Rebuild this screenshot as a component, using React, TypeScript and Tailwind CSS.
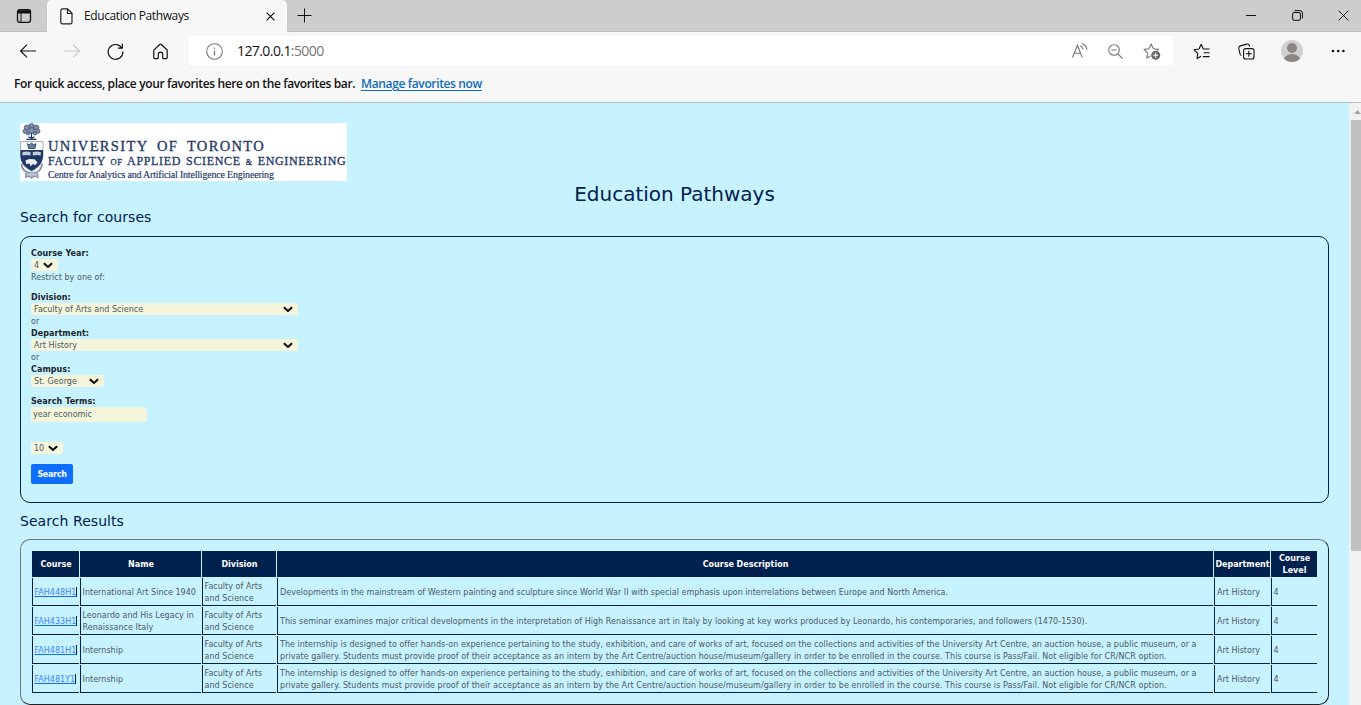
import React from "react";

const ui = "font-['Open_Sans','Noto_Sans',sans-serif]";

function Chevron() {
  return (
    <svg width="10" height="7" viewBox="0 0 10 7" fill="none" className="shrink-0">
      <path d="M0.9 1.2 L5 5 L9.1 1.2" stroke="#000" strokeWidth="2" />
    </svg>
  );
}

function Select({ value, className }: { value: string; className: string }) {
  return (
    <div className={`flex h-3 items-center justify-between rounded-[2px] bg-[#f5f5dc] pl-[3px] pr-[5px] ${className}`}>
      <span className="pt-[2px]">{value}</span>
      <Chevron />
    </div>
  );
}

function Label({ children }: { children: React.ReactNode }) {
  return <div className="h-3 pt-px font-bold tracking-[0.06px] text-[#212529]">{children}</div>;
}

function TabBar() {
  return (
    <div className="flex h-8 w-full border-b border-[#bdbdbd] bg-[#cdcdcd]">
      <div className="flex w-[47px] items-center justify-center rounded-br-[4px]">
        <svg width="16" height="14" viewBox="0 0 16 14" fill="none" className="ml-[1px]">
          <rect x="1.5" y="0.7" width="13" height="12.6" rx="2.2" stroke="#111" strokeWidth="1.3" />
          <path d="M1.5 1.2h13v3.3h-13z" fill="#111" />
          <path d="M5 4v9" stroke="#111" />
        </svg>
      </div>
      <div className="flex h-8 w-[240px] items-center rounded-t-[5px] bg-[#f7f7f7] pl-[13px]">
        <svg width="13" height="17" viewBox="0 0 13 17" fill="none">
          <path d="M2.4 0.9H7.6L12 5.3V14.2a1.6 1.6 0 0 1-1.6 1.6H2.4A1.6 1.6 0 0 1 0.8 14.2V2.5A1.6 1.6 0 0 1 2.4 0.9Z M7.5 1V5.5H12" stroke="#222" strokeWidth="1.2" />
        </svg>
        <span className="ml-[11px] w-[180px] whitespace-nowrap text-[12px] leading-4 tracking-[-0.4px] text-[#111]">Education Pathways</span>
        <svg width="9" height="9" viewBox="0 0 9 9" className="ml-[2px]">
          <path d="M0.6 0.6 8.4 8.4M8.4 0.6 0.6 8.4" stroke="#111" strokeWidth="1.2" />
        </svg>
      </div>
      <svg width="15" height="15" viewBox="0 0 15 15" className="ml-[10px] mt-2">
        <path d="M7.5 0.5v14M0.5 7.5h14" stroke="#111" />
      </svg>
      <div className="ml-auto flex items-center pr-3">
        <svg width="10" height="11" viewBox="0 0 10 11" className="mr-9">
          <path d="M0 5.5h10" stroke="#111" />
        </svg>
        <svg width="11" height="11" viewBox="0 0 11 11" fill="none" className="mr-[35px]">
          <rect x="0.6" y="2.5" width="7.8" height="7.8" rx="1.4" stroke="#111" />
          <path d="M2.5 0.6H8a2.4 2.4 0 0 1 2.4 2.4V8.4" stroke="#111" />
        </svg>
        <svg width="11" height="11" viewBox="0 0 11 11">
          <path d="M0.6 0.6 10.4 10.4M10.4 0.6 0.6 10.4" stroke="#111" />
        </svg>
      </div>
    </div>
  );
}

function Toolbar() {
  return (
    <div className="flex h-[38px] items-center bg-[#f7f7f7] pl-5 pr-4">
      <svg width="16" height="14" viewBox="0 0 16 14" fill="none" stroke="#111" strokeWidth="1.1">
        <path d="M16 7H0.8M7 0.6.6 7 7 13.4" />
      </svg>
      <svg width="16" height="14" viewBox="0 0 16 14" fill="none" stroke="#c8c8c8" strokeWidth="1.1" className="ml-7">
        <path d="M0 7h15.2M9 .6 15.4 7 9 13.4" />
      </svg>
      <svg width="17" height="17" viewBox="0 0 17 17" fill="none" stroke="#111" strokeWidth="1.2" className="ml-[27px]">
        <path d="M14.8 5A7.4 7.4 0 1 0 15.9 8.5M15.4 0.7V5.2H10.8" />
      </svg>
      <svg width="15" height="17" viewBox="0 0 15 17" fill="none" stroke="#111" strokeWidth="1.2" className="ml-[29px]">
        <path d="M.8 7.1 6.7 1.5a1.2 1.2 0 0 1 1.6 0l5.9 5.6V14.6a1 1 0 0 1-1 1H10.3a.6.6 0 0 1-.6-.6V11.3a2.2 2.2 0 0 0-4.4 0V15a.6.6 0 0 1-.6.6H1.8a1 1 0 0 1-1-1Z" />
      </svg>
      <div className="ml-[20px] flex h-[30px] w-[986px] items-center rounded-[4px] bg-white pl-[18px] pr-[13px] shadow-[0_0_3px_rgba(0,0,0,0.05)]">
        <svg width="17" height="17" viewBox="0 0 17 17" fill="none" stroke="#767676">
          <circle cx="8.5" cy="8.5" r="7.8" strokeWidth="1.1" />
          <path d="M8.5 7.4v5M8.5 4.6v1.4" strokeWidth="1.2" />
        </svg>
        <span className="ml-[14px] text-[14px] leading-5 tracking-[-0.58px] text-[#111]">
          127.0.0.1<span className="text-[#767676]">:5000</span>
        </span>
        <svg width="16" height="16" viewBox="0 0 16 16" fill="none" stroke="#767676" strokeWidth="1.1" className="ml-auto">
          <path d="M.5 14.5 5.4 2.2 10.3 14.5M2.2 10.2H8.6M8.2 2.8C9.7 3.5 10.7 4.8 11 6.4M10 .6C12.9 1.6 14.6 3.9 14.9 6.8" />
        </svg>
        <svg width="15" height="15" viewBox="0 0 15 15" fill="none" stroke="#767676" strokeWidth="1.1" className="ml-5">
          <circle cx="6" cy="6" r="5.3" />
          <path d="M9.8 9.8 14.5 14.5M3.3 6h5.4" />
        </svg>
        <svg width="18" height="18" viewBox="0 0 18 18" fill="none" className="ml-[20px]">
          <path d="M7.4 14.1 3.7 16 4.6 11 1 7.4 5.9 6.7 8.2 2 10.4 6.7 15.4 7.4 14.2 8.6" stroke="#767676" strokeWidth="1.1" strokeLinejoin="round" />
          <circle cx="12.7" cy="13.2" r="4.5" fill="#6b6b6b" />
          <path d="M12.7 10.7v5M10.2 13.2h5" stroke="#fff" strokeWidth="1.1" />
        </svg>
      </div>
      <svg width="17" height="17" viewBox="0 0 17 17" fill="none" stroke="#111" strokeWidth="1.1" strokeLinejoin="round" className="ml-[19px]">
        <path d="M8 13.3 4 15.6 4.8 10.4 1 6.8 6 6 8.2 1.2 10.4 6H16.6M10.6 9.8h6M9.8 13.6h6.8" />
      </svg>
      <svg width="17" height="17" viewBox="0 0 17 17" fill="none" stroke="#111" strokeWidth="1.1" className="ml-[28px]">
        <rect x="5.6" y="5.6" width="10.4" height="10.4" rx="2" />
        <path d="M10.8 7.8v6M7.8 10.8h6M3.4 12.5C2.6 12.3 2.3 11.9 2.1 11.2L.8 5.7C.5 4.2 1 3.3 2.3 2.9L8.7 1.1C10 .8 11 1.3 11.4 2.6L11.8 3.5" />
      </svg>
      <svg width="22" height="22" viewBox="0 0 22 22" className="ml-[26px]">
        <defs>
          <clipPath id="avatar"><circle cx="11" cy="11" r="11" /></clipPath>
        </defs>
        <g clipPath="url(#avatar)">
          <rect width="22" height="22" fill="#d2d0ce" />
          <circle cx="11" cy="8" r="5" fill="#8b8683" />
          <ellipse cx="11" cy="19.6" rx="8" ry="5.6" fill="#8b8683" />
        </g>
      </svg>
      <svg width="14" height="4" viewBox="0 0 14 4" className="ml-auto" fill="#111">
        <circle cx="2" cy="2" r="1.3" /><circle cx="7.2" cy="2" r="1.3" /><circle cx="12.4" cy="2" r="1.3" />
      </svg>
    </div>
  );
}

function Crest() {
  return (
    <svg width="24" height="58" viewBox="0 0 24 58" fill="none">
      <g fill="#7f8ea8" stroke="#3b4f77" strokeWidth="0.7">
        <circle cx="11.5" cy="3" r="2.6" /><circle cx="6.8" cy="4.6" r="2.6" /><circle cx="16.2" cy="4.6" r="2.6" />
        <circle cx="5.2" cy="8.2" r="2.2" /><circle cx="17.8" cy="8.2" r="2.2" /><circle cx="11.5" cy="7.6" r="3" />
        <circle cx="8" cy="10.4" r="1.6" /><circle cx="15" cy="10.4" r="1.6" />
      </g>
      <path d="M11.5 10v5M8.5 14.2l3 .8 3-.8M6.5 16.3h10" stroke="#1e3765" strokeWidth="1.3" />
      <path d="M.5 18.5H23V32C23 41 17 45.5 11.7 48.5 6 45.5.5 41 .5 32Z" fill="#fff" stroke="#8f9cb3" strokeWidth="0.8" />
      <path d="M7.5 20.5 9 22 11.5 20 14 22 16 20.5 15 25.5H8.5Z" fill="#6c7c9b" stroke="#1e3765" strokeWidth="0.8" />
      <path d="M.5 27H23V33C22.5 41 17 45 11.7 48 6 45 1 41 .5 33Z" fill="#1e3765" />
      <path d="M2.5 29 6.5 28.5 10.5 29V32.5L6.5 32 2.5 32.5ZM12.8 29 16.8 28.5 20.8 29V32.5L16.8 32 12.8 32.5Z" fill="#c5ccd8" />
      <path d="M5.5 37.5 9 36 14.5 36.2 17.5 39.5 14.8 42.5 13.5 40.8 10.5 43.2 9.5 40.4 6.3 41.2Z" fill="#eef0f5" />
      <path d="M1.5 40.5C1.5 47 5 49.5 11.7 50.5 18.5 49.5 22 47 22 40.5" stroke="#8190ac" strokeWidth="1.8" />
      <path d="M6 50 5.5 54.5 9 53.3 11.5 55 14.5 53.3 18 54.5 17.5 50" stroke="#7b8aa6" strokeWidth="1.2" fill="#b7c0cf" />
    </svg>
  );
}

function Logo() {
  return (
    <div className="flex h-[58px] w-[327px] overflow-hidden bg-white font-['Liberation_Serif',serif] text-[#1e3765]">
      <Crest />
      <div className="ml-1 flex flex-col whitespace-nowrap pt-[15px]">
        <div className="h-4 text-[14.5px] leading-4 tracking-[1.35px] [-webkit-text-stroke:0.3px_#1e3765] [word-spacing:4px]">UNIVERSITY OF TORONTO</div>
        <div className="h-[13px] text-[12px] leading-[14px] tracking-[0.67px] [-webkit-text-stroke:0.3px_#1e3765] [word-spacing:1.3px]">
          FACULTY <span className="text-[8.5px]">OF</span> APPLIED SCIENCE <span className="text-[8px]">&amp;</span> ENGINEERING
        </div>
        <div className="h-[14px] text-[10px] leading-[16px] tracking-[-0.2px] [-webkit-text-stroke:0.15px_#1e3765]">Centre for Analytics and Artificial Intelligence Engineering</div>
      </div>
    </div>
  );
}

const internship = [
  "The internship is designed to offer hands-on experience pertaining to the study, exhibition, and care of works of art, focused on the collections and activities of the University Art Centre, an auction house, a public museum, or a",
  "private gallery. Students must provide proof of their acceptance as an intern by the Art Centre/auction house/museum/gallery in order to be enrolled in the course. This course is Pass/Fail. Not eligible for CR/NCR option.",
];

const courses = [
  { code: "FAH448H1", name: ["International Art Since 1940"], description: ["Developments in the mainstream of Western painting and sculpture since World War II with special emphasis upon interrelations between Europe and North America."] },
  { code: "FAH433H1", name: ["Leonardo and His Legacy in", "Renaissance Italy"], description: ["This seminar examines major critical developments in the interpretation of High Renaissance art in Italy by looking at key works produced by Leonardo, his contemporaries, and followers (1470-1530)."] },
  { code: "FAH481H1", name: ["Internship"], description: internship },
  { code: "FAH481Y1", name: ["Internship"], description: internship },
];

const columns = "grid grid-cols-[47px_121px_74px_936px_56px_46px] gap-x-px";

function Cell({ lines, className = "pl-[1.5px] tracking-[0.03px]" }: { lines: string[]; className?: string }) {
  return (
    <div className={`flex flex-col justify-center whitespace-nowrap border-b border-l border-[#00204e] pt-[2px] ${className}`}>
      {lines.map((line, i) => (
        <span key={line} className={i === 1 ? "tracking-[0.05px]" : ""}>{line}</span>
      ))}
    </div>
  );
}

function Results() {
  return (
    <div className="h-[166px] rounded-[10px] border border-b-[#222] border-l-[#767676] border-r-[#222] border-t-[#767676] pl-[11px] pt-[11px]">
      <div className={`${columns} h-[26px] text-center font-bold text-white`}>
        {["Course", "Name", "Division", "Course Description", "Department", "Course Level"].map((h) => (
          <div key={h} className="flex items-center justify-center bg-[#00204e] pl-px pt-[2px]">{h}</div>
        ))}
      </div>
      {courses.map((c) => (
        <div key={c.code} className={`${columns} mt-px h-7`}>
          <div className="flex items-center border-b border-l border-[#00204e] pl-[1.5px]">
            <a className="h-[10px] border-r border-[#00204e] leading-[11px] text-[#3d86f7] underline decoration-[#0d6efd] underline-offset-1">{c.code}</a>
          </div>
          <Cell lines={c.name} />
          <Cell lines={["Faculty of Arts", "and Science"]} />
          <Cell lines={c.description} className="pl-[2px] tracking-[0.025px]" />
          <Cell lines={["Art History"]} className="pl-[2px]" />
          <Cell lines={["4"]} />
        </div>
      ))}
    </div>
  );
}

export default function App() {
  return (
    <div className={`flex h-[705px] w-[1361px] flex-col overflow-hidden bg-[#f7f7f7] ${ui}`}>
      <TabBar />
      <Toolbar />
      <div className="flex h-[33px] border-b border-[#bcbcbc] bg-[#f7f7f7] pl-[14px] pt-[6px] text-[12px] font-semibold leading-4 text-[#111]">
        <span className="w-[347px] whitespace-nowrap tracking-[-0.37px]">For quick access, place your favorites here on the favorites bar.</span>
        <a className="whitespace-nowrap tracking-[-0.36px] text-[#0f6cbd] underline underline-offset-2">Manage favorites now</a>
      </div>
      <div className="flex h-[602px]">
        <main className="w-[1349px] bg-[#c7f2ff] px-5 pt-5 font-['DejaVu_Sans',sans-serif] text-[8px] leading-3 text-[#4c5a62]">
          <Logo />
          <h1 className="h-[25px] text-center text-[20px] leading-[26px] text-[#00204e]">Education Pathways</h1>
          <h2 className="h-[30px] text-[14px] leading-[22px] tracking-[0.06px] text-[#00204e]">Search for courses</h2>
          <section className="h-[267px] rounded-[10px] border border-[#00204e] pl-[10px] pt-[10px]">
            <Label>Course Year:</Label>
            <Select value="4" className="w-[27px]" />
            <div className="mb-2 h-3 pt-px tracking-[0.05px]">Restrict by one of:</div>
            <Label>Division:</Label>
            <Select value="Faculty of Arts and Science" className="w-[267px] tracking-[0.03px]" />
            <div className="h-3 pt-px">or</div>
            <Label>Department:</Label>
            <Select value="Art History" className="w-[267px]" />
            <div className="h-3 pt-px">or</div>
            <Label>Campus:</Label>
            <Select value="St. George" className="mb-2 w-[73px] tracking-[0.05px]" />
            <Label>Search Terms:</Label>
            <div className="flex h-[15px] w-[116px] items-center rounded-[2px] bg-[#f5f5dc] pl-[2px]">year economic</div>
            <Select value="10" className="mt-5 w-8" />
            <button className="mt-[10px] flex h-5 w-[42px] items-center justify-center rounded-[2px] bg-[#0d6efd] pt-[2px] font-bold tracking-[-0.3px] text-white">Search</button>
          </section>
          <h2 className="h-9 pt-[7px] text-[14px] leading-[22px] tracking-[0.06px] text-[#00204e]">Search Results</h2>
          <Results />
        </main>
        <div className="w-3 bg-[#f1f1f1] pl-[2px]">
          <div className="flex h-[17px] items-center justify-center pl-[3px]">
            <svg width="7" height="4" viewBox="0 0 7 4"><path d="M0 4 3.5 0 7 4Z" fill="#a3a3a3" /></svg>
          </div>
          <div className="h-[431px] bg-[#c1c1c1]" />
        </div>
      </div>
    </div>
  );
}
